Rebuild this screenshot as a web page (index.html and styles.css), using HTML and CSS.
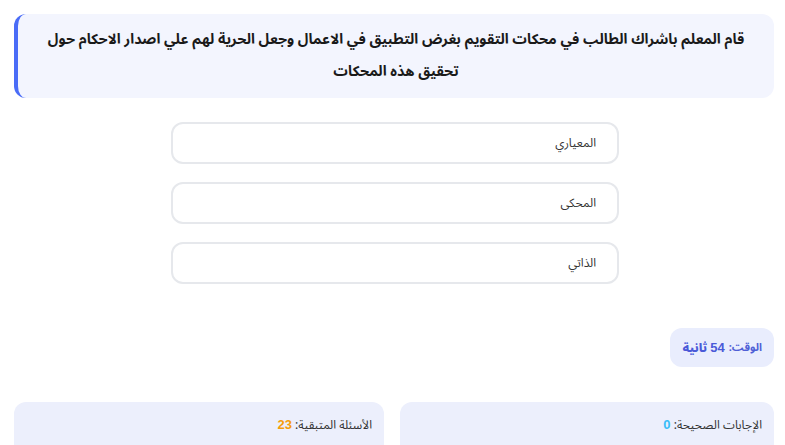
FILE: index.html
```html
<!DOCTYPE html>
<html lang="ar" dir="rtl">
<head>
<meta charset="utf-8">
<link rel="stylesheet" href="styles.css">
</head>
<body>
<div class="page">
  <div class="question">قام المعلم باشراك الطالب في محكات التقويم بغرض التطبيق في الاعمال وجعل الحرية لهم علي اصدار الاحكام حول تحقيق هذه المحكات</div>
  <div class="options">
    <div class="option">المعياري</div>
    <div class="option">المحكى</div>
    <div class="option">الذاتي</div>
  </div>
  <div class="timer-row">
    <div class="timer">الوقت: <b><span class="num">54</span> ثانية</b></div>
  </div>
  <div class="stats">
    <div class="stat">الإجابات الصحيحة: <b class="correct">0</b></div>
    <div class="stat">الأسئلة المتبقية: <b class="remaining">23</b></div>
  </div>
</div>
</body>
</html>
```
FILE: styles.css
```css
html, body {
  margin: 0;
  padding: 0;
  background: #ffffff;
  font-family: "Noto Sans Arabic", "Liberation Sans", sans-serif;
  color: #222;
}
.page {
  padding: 14px 11px 0 14px;
}
.question {
  background: #f3f5fe;
  border-left: 4px solid #4a6cf7;
  border-radius: 12px;
  padding: 10px 20px;
  text-align: center;
  font-weight: bold;
  font-size: 14.4px;
  line-height: 32px;
  color: #1a1a1a;
}
.options {
  width: 448px;
  margin: 24px auto 0;
  display: flex;
  flex-direction: column;
  gap: 18px;
  position: relative;
  left: 1px;
}
.option {
  height: 42px;
  box-sizing: border-box;
  border: 2px solid #e6e8ec;
  border-radius: 12px;
  display: flex;
  align-items: center;
  padding: 0 21px;
  font-size: 12px;
  color: #333;
}
.timer-row {
  display: flex;
  margin-top: 44px;
}
.timer {
  background: #e9edfd;
  border-radius: 12px;
  height: 39px;
  box-sizing: border-box;
  padding: 0 12px;
  display: flex;
  align-items: center;
  gap: 4px;
  font-size: 11px;
  font-weight: bold;
  color: #4f5fd6;
}
.timer b {
  font-size: 11.5px;
  color: #4a5ad8;
}
.timer .num {
  font-family: "Liberation Sans", sans-serif;
  font-size: 13px;
}
.stats {
  margin-top: 35px;
  display: grid;
  grid-template-columns: 374px 370px;
  gap: 16px;
}
.stat {
  background: #eceffc;
  border-radius: 12px;
  height: 60px;
  box-sizing: border-box;
  padding: 11px 12px;
  font-size: 12px;
  color: #333;
}
.stat b {
  font-family: "Liberation Sans", sans-serif;
  font-size: 13px;
}
.correct { color: #38bdf8; }
.remaining { color: #f59e0b; }
```
